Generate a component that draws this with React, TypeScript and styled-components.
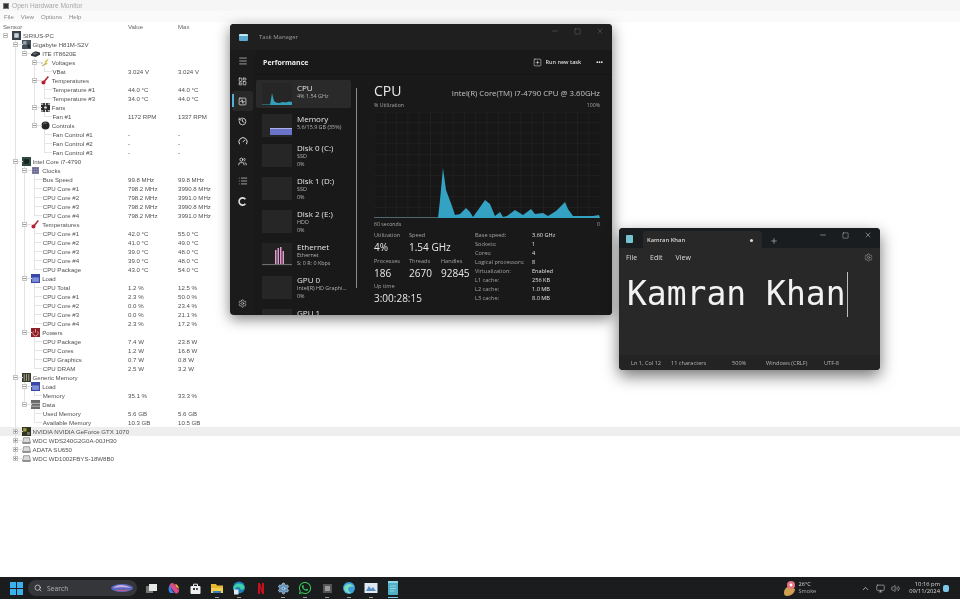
import React from 'react';
import styled, { createGlobalStyle } from 'styled-components';
import { Menu, SquareActivity, History, Gauge, Users, List, Settings, Search, Minus, Square, X, Plus, ChevronUp, Volume2, Monitor as MonitorIcon, LayoutDashboard, SquarePlus } from 'lucide-react';
import { FaWhatsapp } from 'react-icons/fa';

const Global = createGlobalStyle`
  html, body { margin: 0; padding: 0; background: #fff; }
  * { box-sizing: border-box; }
  #root { width: 960px; height: 600px; overflow: hidden; }
`;

const SANS = `"Open Sans", "Noto Sans", "Liberation Sans", sans-serif`;

const Desktop = styled.div`
  position: relative;
  width: 960px;
  height: 600px;
  display: flex;
  flex-direction: column;
  background: #fff;
  font-family: ${SANS};
  filter: blur(0.35px);
  overflow: hidden;
`;

/* ---------- Open Hardware Monitor ---------- */
const Monitor = styled.div`
  flex: 1;
  display: flex;
  flex-direction: column;
  color: #505050;
  font-family: "Liberation Sans", sans-serif;
  font-size: 6.1px;
`;
const MonTitle = styled.div`
  height: 11px;
  display: flex;
  align-items: center;
  gap: 3px;
  padding-left: 3px;
  background: #f6f6f6;
  color: #a8a8a8;
  font-size: 6.6px;
`;
const MonLogo = styled.span`
  width: 6px;
  height: 6px;
  background: #333;
  border: 1px solid #777;
`;
const MonMenu = styled.div`
  height: 11px;
  display: flex;
  align-items: center;
  gap: 7px;
  padding-left: 4px;
  background: #fafafa;
  color: #888;
  font-size: 6.1px;
`;
const ColumnHead = styled.div`
  height: 9px;
  display: grid;
  grid-template-columns: 125px 50px 1fr;
  align-items: center;
  padding-left: 3px;
  color: #666;
`;
const Tree = styled.div`
  display: flex;
  flex-direction: column;
`;
const TreeRow = styled.div<{ $hl?: boolean }>`
  position: relative;
  height: 9px;
  display: grid;
  grid-template-columns: 128px 50px 1fr;
  align-items: center;
  line-height: 9px;
  white-space: nowrap;
  background: ${p => (p.$hl ? '#eeeeee' : 'transparent')};
`;
const NameCell = styled.div<{ $x: number }>`
  padding-left: ${p => p.$x}px;
  display: flex;
  align-items: center;
  gap: 2px;
  position: relative;
  height: 9px;
`;
const VGuide = styled.span<{ $x: number; $stub?: boolean }>`
  position: absolute;
  left: ${p => p.$x}px;
  top: 0;
  height: ${p => (p.$stub ? '5px' : '9px')};
  width: 1px;
  background: #e4e4e4;
`;
const HGuide = styled.span<{ $x: number }>`
  position: absolute;
  left: ${p => p.$x}px;
  top: 4px;
  height: 1px;
  width: 8px;
  background: #e4e4e4;
`;
const Expander = styled.span<{ $x: number; $plus?: boolean }>`
  position: absolute;
  left: ${p => p.$x}px;
  top: 2px;
  width: 5px;
  height: 5px;
  border: 1px solid #c4c4c4;
  background: #fff;
  &::after {
    content: '';
    position: absolute;
    left: 0;
    right: 0;
    top: 1px;
    height: 1px;
    background: #999;
  }
  ${p => p.$plus && `
    &::before {
      content: '';
      position: absolute;
      left: 1px;
      top: 0;
      bottom: 0;
      width: 1px;
      background: #999;
    }
  `}
`;
const IconSvg = styled.svg`
  width: 9px;
  height: 9px;
  flex: 0 0 9px;
`;

type IconKind = 'pc' | 'board' | 'chip' | 'volt' | 'temp' | 'fan' | 'ctrl' | 'cpu' | 'clock' | 'load' | 'power' | 'ram' | 'data' | 'gpu' | 'disk';

const ICON_ART: Record<IconKind, React.ReactNode> = {
  pc: <><rect width="8" height="8" fill="#3a4048" /><rect x="2" y="2" width="4" height="4" fill="#c8d0d8" /></>,
  board: <><rect width="8" height="8" fill="#44505a" /><rect x="1" y="1" width="3" height="3" fill="#9aa5ae" /><rect x="5" y="4" width="2" height="3" fill="#22282e" /></>,
  chip: <><path d="M0 4l4-2 4 1v2L4 7 0 6z" fill="#303438" /><path d="M1 4l3-1 2 1-3 1z" fill="#6a7078" /></>,
  volt: <><path d="M7 0L3 3l1 1-4 4 6-3-1-1z" fill="#d8c850" /><path d="M0 5l2-1M1 7l3-2" stroke="#9a9a9a" strokeWidth=".6" /></>,
  temp: <><path d="M6.5 .5L2.8 5" stroke="#b03040" strokeWidth="1.4" /><circle cx="2.2" cy="5.8" r="1.8" fill="#b8202f" /></>,
  fan: <><rect width="8" height="8" fill="#2a2a2a" /><circle cx="4" cy="4" r="1.2" fill="#ddd" /><path d="M0 1h2M6 1h2M0 7h2M6 7h2M4 0v2M4 6v2" stroke="#ddd" strokeWidth="1" /></>,
  ctrl: <><circle cx="4" cy="4" r="3.6" fill="#262626" /><path d="M2 2.6a2.6 2.6 0 0 1 3-.6" stroke="#999" strokeWidth=".7" fill="none" /></>,
  cpu: <><rect width="8" height="8" fill="#2f4a40" /><rect x="2" y="2" width="4" height="4" fill="#15221d" /></>,
  clock: <><rect x="1" y="1" width="6" height="6" fill="#60608a" /><path d="M1 3h6M1 5h6M3 1v6M5 1v6" stroke="#9a9ab8" strokeWidth=".5" /></>,
  load: <><rect width="8" height="8" fill="#3848a8" /><rect x="1" y="3" width="6" height="4" fill="#8090d8" /></>,
  power: <><rect width="8" height="8" fill="#8a2028" /><path d="M4 1v3M2.2 3a2.4 2.4 0 1 0 3.6 0" stroke="#e8b0b0" strokeWidth=".7" fill="none" /></>,
  ram: <><rect width="8" height="8" fill="#3a3a30" /><path d="M2 1v6M4 1v6M6 1v6" stroke="#b8b8a0" strokeWidth=".7" /></>,
  data: <><rect width="8" height="8" fill="#6a6a6a" /><path d="M0 3h8M0 5.5h8" stroke="#c8c8c8" strokeWidth=".7" /></>,
  gpu: <><rect width="8" height="8" fill="#30331e" /><rect x="1" y="1" width="3" height="3" fill="#9ca040" /><rect x="4.5" y="4.5" width="2.5" height="2.5" fill="#777" /></>,
  disk: <><path d="M1.5 1.5h5l1 4.5H.5z" fill="#d8d8d8" stroke="#777" strokeWidth=".6" /><rect x=".5" y="5.5" width="7" height="1.5" fill="#888" /></>,
};
const TreeIcon = ({ kind }: { kind: IconKind }) => <IconSvg viewBox="0 0 8 8">{ICON_ART[kind]}</IconSvg>;

type Node = { n: string; v?: string; m?: string; i?: IconKind; hl?: boolean; closed?: boolean; c?: Node[] };
const leaf = (n: string, v: string, m: string): Node => ({ n, v, m });

const TREE: Node = {
  n: 'SIRIUS-PC', i: 'pc', c: [
    { n: 'Gigabyte H81M-S2V', i: 'board', c: [
      { n: 'ITE IT8620E', i: 'chip', c: [
        { n: 'Voltages', i: 'volt', c: [leaf('VBat', '3.024 V', '3.024 V')] },
        { n: 'Temperatures', i: 'temp', c: [leaf('Temperature #1', '44.0 °C', '44.0 °C'), leaf('Temperature #3', '34.0 °C', '44.0 °C')] },
        { n: 'Fans', i: 'fan', c: [leaf('Fan #1', '1172 RPM', '1337 RPM')] },
        { n: 'Controls', i: 'ctrl', c: [leaf('Fan Control #1', '-', '-'), leaf('Fan Control #2', '-', '-'), leaf('Fan Control #3', '-', '-')] },
      ] },
    ] },
    { n: 'Intel Core i7-4790', i: 'cpu', c: [
      { n: 'Clocks', i: 'clock', c: [
        leaf('Bus Speed', '99.8 MHz', '99.8 MHz'), leaf('CPU Core #1', '798.2 MHz', '3990.8 MHz'), leaf('CPU Core #2', '798.2 MHz', '3991.0 MHz'),
        leaf('CPU Core #3', '798.2 MHz', '3990.8 MHz'), leaf('CPU Core #4', '798.2 MHz', '3991.0 MHz'),
      ] },
      { n: 'Temperatures', i: 'temp', c: [
        leaf('CPU Core #1', '42.0 °C', '55.0 °C'), leaf('CPU Core #2', '41.0 °C', '49.0 °C'), leaf('CPU Core #3', '39.0 °C', '48.0 °C'),
        leaf('CPU Core #4', '39.0 °C', '48.0 °C'), leaf('CPU Package', '43.0 °C', '54.0 °C'),
      ] },
      { n: 'Load', i: 'load', c: [
        leaf('CPU Total', '1.2 %', '12.5 %'), leaf('CPU Core #1', '2.3 %', '50.0 %'), leaf('CPU Core #2', '0.0 %', '23.4 %'),
        leaf('CPU Core #3', '0.0 %', '21.1 %'), leaf('CPU Core #4', '2.3 %', '17.2 %'),
      ] },
      { n: 'Powers', i: 'power', c: [
        leaf('CPU Package', '7.4 W', '23.8 W'), leaf('CPU Cores', '1.2 W', '16.8 W'), leaf('CPU Graphics', '0.7 W', '0.8 W'), leaf('CPU DRAM', '2.5 W', '3.2 W'),
      ] },
    ] },
    { n: 'Generic Memory', i: 'ram', c: [
      { n: 'Load', i: 'load', c: [leaf('Memory', '35.1 %', '33.3 %')] },
      { n: 'Data', i: 'data', c: [leaf('Used Memory', '5.6 GB', '5.6 GB'), leaf('Available Memory', '10.3 GB', '10.5 GB')] },
    ] },
    { n: 'NVIDIA NVIDIA GeForce GTX 1070', i: 'gpu', hl: true, closed: true },
    { n: 'WDC WDS240G2G0A-00JH30', i: 'disk', closed: true },
    { n: 'ADATA SU650', i: 'disk', closed: true },
    { n: 'WDC WD1002FBYS-18W8B0', i: 'disk', closed: true },
  ],
};

type Flat = { node: Node; depth: number; guides: number[]; last: boolean };
const flatten = (node: Node, depth: number, guides: number[], last: boolean, out: Flat[]) => {
  out.push({ node, depth, guides, last });
  const kids = node.c || [];
  kids.forEach((k, i) => {
    const isLast = i === kids.length - 1;
    flatten(k, depth + 1, isLast ? guides : [...guides, depth + 1], isLast, out);
  });
  return out;
};
const ROWS = flatten(TREE, 0, [], false, []);
const guideX = (d: number) => Math.round(5 + d * 9.7);

const SensorTree = () => (
  <Tree>
    {ROWS.map(({ node, depth, guides, last }, i) => {
      const isLeaf = !node.i;
      const textX = isLeaf ? 14 + depth * 9.6 : 12 + depth * 9.6;
      return (
        <TreeRow key={i} $hl={node.hl}>
          <NameCell $x={textX}>
            {guides.map(g => <VGuide key={g} $x={guideX(g)} />)}
            {depth > 0 && last && <VGuide $x={guideX(depth)} $stub />}
            {depth > 0 && <HGuide $x={guideX(depth)} />}
            {!isLeaf && <Expander $x={guideX(depth) - 2} $plus={node.closed} />}
            {node.i && <TreeIcon kind={node.i} />}
            <span>{node.n}</span>
          </NameCell>
          <span>{node.v}</span>
          <span>{node.m}</span>
        </TreeRow>
      );
    })}
  </Tree>
);

/* ---------- Windows ---------- */
const TaskWin = styled.section`
  position: absolute;
  left: 230px;
  top: 24px;
  width: 382px;
  height: 291px;
  background: #1b1b1b;
  border-radius: 4px;
  box-shadow: 0 4px 14px rgba(0, 0, 0, .5);
  color: #e4e4e4;
  display: flex;
  flex-direction: column;
  overflow: hidden;
`;
const TmTitle = styled.header`
  height: 26px;
  display: flex;
  align-items: center;
  padding: 0 8px 0 9px;
  gap: 11px;
  background: #1f1f1f;
  font-size: 6px;
  color: #9a9a9a;
  flex: none;
`;
const TmLogo = styled.span`
  width: 9px;
  height: 7px;
  border-radius: 1px;
  background: linear-gradient(#bfe6f5 0 30%, #5aa9d0 30% 100%);
`;
const TmControls = styled.div`
  align-self: flex-start;
  margin: 3px 0 0 auto;
  display: flex;
`;
const WinControls = styled.div<{ $gap: number; $color: string }>`
  display: flex;
  align-items: center;
  gap: ${p => p.$gap}px;
  color: ${p => p.$color};
`;
const TmBody = styled.div`
  flex: 1;
  min-height: 0;
  display: flex;
`;
const Rail = styled.nav`
  width: 25px;
  flex: none;
  display: flex;
  flex-direction: column;
  align-items: center;
  gap: 10px;
  padding: 6px 0 7px;
  color: #dedede;
`;
const RailItem = styled.div<{ $on?: boolean }>`
  position: relative;
  width: 21px;
  height: 10px;
  display: flex;
  align-items: center;
  justify-content: center;
  ${p => p.$on && `
    &::before {
      content: '';
      position: absolute;
      left: 0;
      top: -2px;
      width: 1.5px;
      height: 13px;
      background: #4aa8d8;
    }
    &::after {
      content: '';
      position: absolute;
      inset: -5px 0;
      background: rgba(255,255,255,.06);
      border-radius: 3px;
    }
  `}
`;
const RailBottom = styled(RailItem)`
  margin-top: auto;
`;
const TmContent = styled.div`
  flex: 1;
  min-width: 0;
  display: flex;
  flex-direction: column;
  background: #191919;
`;
const TmHeader = styled.div`
  height: 25px;
  flex: none;
  display: flex;
  align-items: center;
  padding: 0 9px 0 8px;
  font-size: 7px;
  font-weight: 700;
  color: #eee;
  border-bottom: 1px solid #141414;
`;
const RunTask = styled.div`
  margin-left: auto;
  display: flex;
  align-items: center;
  gap: 3px;
  font-size: 5.5px;
  font-weight: 600;
  color: #ddd;
`;
const Dots = styled.span`
  margin-left: 15px;
  font-size: 5.5px;
  letter-spacing: .2px;
  line-height: 6px;
  color: #eee;
`;
const PerfArea = styled.div`
  flex: 1;
  min-height: 0;
  display: flex;
`;
const PerfList = styled.div`
  position: relative;
  width: 103px;
  flex: none;
  overflow: hidden;
`;
const ListStack = styled.div`
  margin-top: -2px;
`;
const ListBar = styled.span`
  position: absolute;
  right: 1px;
  top: 13px;
  width: 1px;
  height: 200px;
  background: #8a8a8a;
`;
const Card = styled.div<{ $on?: boolean; $lift?: number; $sink?: number }>`
  position: relative;
  height: 33px;
  display: flex;
  align-items: center;
  gap: 5px;
  padding-left: 7px;
  padding-top: ${p => p.$sink || 0}px;
  padding-bottom: ${p => p.$lift || 0}px;
  ${p => p.$on && `
    &::before {
      content: '';
      position: absolute;
      left: 1px;
      right: 7px;
      top: 7px;
      bottom: -2px;
      background: #2a2a2a;
      border-radius: 2px;
    }
  `}
  & > * { position: relative; }
`;
const Thumb = styled.div<{ $dark?: boolean; $dy?: number }>`
  width: 30px;
  height: 23px;
  flex: none;
  margin-top: ${p => p.$dy || 0}px;
  background: ${p => (p.$dark ? '#222' : '#262626')};
  svg { display: block; }
`;
const CardText = styled.div`
  display: flex;
  flex-direction: column;
  white-space: nowrap;
`;
const CardName = styled.span`
  font-size: 8px;
  line-height: 9px;
  color: #e6e6e6;
`;
const CardSub = styled.span`
  font-size: 5.4px;
  line-height: 8px;
  color: #b4b4b4;
`;
const PerfMain = styled.div`
  flex: 1;
  min-width: 0;
  padding: 7px 12px 0 16px;
  display: flex;
  flex-direction: column;
`;
const HeadRow = styled.div<{ $mt?: number }>`
  display: flex;
  justify-content: space-between;
  align-items: baseline;
  margin-top: ${p => p.$mt || 0}px;
`;
const CpuTitle = styled.span`
  font-size: 14px;
  line-height: 18px;
  color: #eaeaea;
`;
const CpuModel = styled.span`
  font-size: 7.8px;
  color: #c4c4c4;
`;
const Tiny = styled.span`
  font-size: 5.2px;
  line-height: 8px;
  color: #a8a8a8;
`;
const Graph = styled.div`
  height: 106px;
  margin-top: 3px;
  background: #171717;
  svg { display: block; }
`;
const StatsRow = styled.div`
  display: flex;
  margin-top: 4px;
`;
const StatsLeft = styled.div`
  width: 101px;
  flex: none;
  display: grid;
  grid-template-columns: 35px 32px 34px;
  grid-auto-rows: 25.5px;
`;
const Stat = styled.div<{ $span?: number }>`
  display: flex;
  flex-direction: column;
  white-space: nowrap;
  grid-column: span ${p => p.$span || 1};
`;
const StatLabel = styled.span`
  font-size: 5.6px;
  line-height: 7px;
  color: #a2a2a2;
`;
const StatValue = styled.span`
  font-size: 10px;
  line-height: 16px;
  color: #e8e8e8;
`;
const Specs = styled.div`
  display: grid;
  grid-template-columns: 57px auto;
  grid-auto-rows: 9px;
  align-items: center;
  font-size: 5.6px;
  color: #a4a4a4;
  margin-top: -2px;
  height: 72px;
  & > b { font-weight: 400; color: #e0e0e0; }
`;

const NoteWin = styled.section`
  position: absolute;
  left: 619px;
  top: 228px;
  width: 261px;
  height: 142px;
  background: #282828;
  border-radius: 4px;
  box-shadow: 0 6px 16px rgba(0, 0, 0, .55);
  display: flex;
  flex-direction: column;
  overflow: hidden;
  color: #e4e4e4;
`;
const NoteTop = styled.header`
  height: 20px;
  flex: none;
  display: flex;
  align-items: flex-end;
  padding: 0 7px;
  background: #191d20;
`;
const NoteLogo = styled.span`
  width: 7px;
  height: 8px;
  margin: 0 10px 5px 0;
  background: #74c4cf;
  border-radius: 1px;
`;
const NoteTab = styled.div`
  width: 119px;
  height: 17px;
  display: flex;
  align-items: center;
  justify-content: space-between;
  padding: 1px 9px 0 4px;
  background: #282828;
  border-radius: 3px 3px 0 0;
  font-size: 5.8px;
  font-weight: 600;
  color: #d8d8d8;
`;
const TabDot = styled.span`
  width: 3px;
  height: 3px;
  border-radius: 50%;
  background: #ddd;
`;
const NewTab = styled.span`
  margin: 0 0 3px 8px;
  display: flex;
  color: #b8b8b8;
`;
const NoteControls = styled.div`
  margin: 0 1px 9px auto;
  display: flex;
`;
const NoteMenu = styled.div`
  height: 18px;
  flex: none;
  display: flex;
  align-items: center;
  gap: 13px;
  padding: 0 7px;
  font-size: 7px;
  color: #dcdcdc;
`;
const MenuGear = styled.span`
  margin-left: auto;
  display: flex;
  color: #aaa;
`;
const NoteEditor = styled.div`
  flex: 1;
  min-height: 0;
  padding: 6px 0 0 8px;
  display: flex;
  align-items: flex-start;
  font-family: "DejaVu Sans Mono", "Liberation Mono", monospace;
  font-size: 33px;
  line-height: 44px;
  color: #f2f2f2;
  white-space: pre;
`;
const Caret = styled.span`
  width: 1px;
  height: 45px;
  margin-left: 1px;
  background: #bdbdbd;
`;
const NoteStatus = styled.footer`
  height: 15px;
  flex: none;
  display: grid;
  grid-template-columns: 40px 61px 34px 58px 1fr;
  align-items: center;
  padding-left: 12px;
  background: #232323;
  font-size: 5.6px;
  color: #b4b4b4;
  white-space: nowrap;
`;

/* ---------- Taskbar ---------- */
const Taskbar = styled.footer`
  height: 22px;
  margin-bottom: 1px;
  flex: none;
  display: flex;
  align-items: center;
  padding: 0 11px 0 10px;
  background: #1a1c1e;
  color: #ddd;
`;
const StartGrid = styled.span`
  width: 13px;
  height: 13px;
  display: grid;
  grid-template-columns: 1fr 1fr;
  gap: 1px;
  & > i { background: #3bb0ee; display: block; }
`;
const SearchPill = styled.div`
  margin-left: 5px;
  width: 109px;
  height: 16px;
  border-radius: 8px;
  background: #34363a;
  display: flex;
  align-items: center;
  gap: 5px;
  padding: 0 3px 0 6px;
  font-size: 6.8px;
  color: #b4b4b4;
`;
const SearchArt = styled.span`
  margin-left: auto;
  display: flex;
`;
const TaskIcons = styled.div`
  margin-left: 7px;
  display: flex;
  align-items: center;
  gap: 8px;
`;
const TaskIcon = styled.span<{ $active?: boolean; $open?: boolean }>`
  position: relative;
  width: 14px;
  height: 14px;
  display: flex;
  align-items: center;
  justify-content: center;
  ${p => (p.$open || p.$active) && `
    &::after {
      content: '';
      position: absolute;
      left: ${p.$active ? 2 : 5}px;
      right: ${p.$active ? 2 : 5}px;
      bottom: -3px;
      height: 1px;
      background: ${p.$active ? '#7ccbe8' : '#999'};
    }
  `}
`;
const Weather = styled.div`
  margin-left: auto;
  display: flex;
  align-items: center;
  gap: 2px;
`;
const WeatherText = styled.div`
  display: flex;
  flex-direction: column;
  font-size: 5.6px;
  line-height: 7px;
  color: #d8d8d8;
  & > span:last-child { color: #aaa; }
`;
const Tray = styled.div`
  margin-left: 45px;
  display: flex;
  align-items: center;
  gap: 6px;
  color: #cfcfcf;
`;
const Clock = styled.div`
  margin-left: 9px;
  display: flex;
  flex-direction: column;
  align-items: flex-end;
  font-size: 5.8px;
  line-height: 7.5px;
  color: #d8d8d8;
`;
const Notify = styled.span`
  margin-left: 3px;
  width: 6px;
  height: 7px;
  border-radius: 2px;
  background: #7cc8e8;
`;

/* ---------- Drawings ---------- */
const Spark = ({ kind }: { kind: string }) => {
  if (kind === 'cpu') {
    return (
      <svg width="30" height="23" viewBox="0 0 30 23">
        <path d="M0 21.5H8M27 21.5H30" stroke="#3aa" strokeWidth=".5" />
        <path d="M8 22L10 10l2 8 2 1.5 3 .5 4-1 3 .5 3-1 3 .5V22z" fill="#32a0b8" />
      </svg>
    );
  }
  if (kind === 'mem') {
    return (
      <svg width="30" height="23" viewBox="0 0 30 23">
        <rect x="8" y="14" width="22" height="7" fill="#6a74c8" />
        <rect x="8" y="14" width="22" height="1" fill="#aab0ea" />
      </svg>
    );
  }
  if (kind === 'eth') {
    return (
      <svg width="30" height="23" viewBox="0 0 30 23">
        <path d="M0 21.5H30" stroke="#bbb" strokeWidth=".5" />
        <path d="M13 21V7h1.5v14zM15.5 21V5H17v16zM18 21V4h1.5v17zM20.5 21V8H22v13z" fill="#e29ad0" />
      </svg>
    );
  }
  return null;
};

const CPU_PATH = 'M64 106L66 88L69 56L72 78L75 86L78 94L81 103L86 102L92 96L96 100L99 105L104 98L111 88L116 92L121 104L126 100L129 105L133 104L141 98L149 103L157 97L161 102L169 101L174 104L182 99L191 90L194 97L199 104L219 104L225 103L226 106Z';
const CpuGraph = () => {
  const v = Array.from({ length: 20 }, (_, i) => i * (226 / 20));
  const h = Array.from({ length: 10 }, (_, i) => i * 10.6);
  return (
    <svg width="226" height="106" viewBox="0 0 226 106">
      {v.map(x => <path key={x} d={`M${x} 0V106`} stroke="#262626" strokeWidth=".6" />)}
      {h.map(y => <path key={y} d={`M0 ${y}H226`} stroke="#262626" strokeWidth=".6" />)}
      <path d="M0 105.5H64" stroke="#5a7e88" strokeWidth=".8" />
      <path d={CPU_PATH} fill="#34a2c2" />
    </svg>
  );
};

const Winbar = ({ gap, color, s }: { gap: number; color: string; s: number }) => (
  <WinControls $gap={gap} $color={color}>
    <Minus size={s} strokeWidth={1.4} />
    <Square size={s - 1} strokeWidth={1.4} />
    <X size={s} strokeWidth={1.4} />
  </WinControls>
);

const ServicesIcon = () => (
  <svg width="9" height="9" viewBox="0 0 9 9"><path d="M7.4 2.2A3.6 3.6 0 1 0 7.4 6.8" fill="none" stroke="currentColor" strokeWidth="1.6" /></svg>
);

const TaskApps = () => (
  <TaskIcons>
    <TaskIcon>
      <svg width="13" height="13" viewBox="0 0 13 13"><rect x="1" y="4" width="7" height="7" fill="#777" /><rect x="4" y="2" width="8" height="7" fill="#e8e8e8" /></svg>
    </TaskIcon>
    <TaskIcon>
      <svg width="13" height="13" viewBox="0 0 13 13"><path d="M3 2c2-2 4-1 5 1l2 3c1 2 3 1 2 3-1 3-3 3-4 2L5 7C4 5 2 8 2 6z" fill="#d8488a" /><path d="M3 11C1 9 1 5 3 3l2 5c1 2 2 3 3 3z" fill="#3f7fe0" /><path d="M8 2c2 0 4 2 4 5L9 5z" fill="#e8a030" /></svg>
    </TaskIcon>
    <TaskIcon>
      <svg width="13" height="13" viewBox="0 0 13 13"><rect x="1.5" y="4" width="10" height="8" rx="1" fill="#eee" /><path d="M4.5 4V2.2h4V4" stroke="#eee" fill="none" /><rect x="4" y="6" width="2" height="2" fill="#333" /><rect x="7" y="6" width="2" height="2" fill="#555" /></svg>
    </TaskIcon>
    <TaskIcon $open>
      <svg width="14" height="13" viewBox="0 0 14 13"><path d="M1 2h5l1 1.5h6V11H1z" fill="#e8b830" /><rect x="1" y="6" width="12" height="5" fill="#f4d050" /><rect x="3" y="9" width="8" height="2" fill="#3a80c0" /></svg>
    </TaskIcon>
    <TaskIcon $open>
      <svg width="14" height="14" viewBox="0 0 14 14"><circle cx="7" cy="6.5" r="6" fill="#1b7fb8" /><path d="M1.5 6C3 2 10 1 12.5 6c.5 2-2 3-4 2.5C9 6 5 5 3.5 7c-1 1.5 0 4 2.5 5C3 12 1 9 1.5 6z" fill="#3fd0a8" /><rect x="2" y="8.5" width="4.5" height="5" rx=".5" fill="#dfe8f0" /></svg>
    </TaskIcon>
    <TaskIcon>
      <svg width="6" height="11" viewBox="0 0 6 11"><path d="M0 0h2l2 6V0h2v11H4L2 5v6H0z" fill="#c8101c" /></svg>
    </TaskIcon>
    <TaskIcon $open>
      <Settings size={13} color="#c8d8e8" fill="#5b8db8" strokeWidth={1.4} />
    </TaskIcon>
    <TaskIcon $open>
      <FaWhatsapp size={14} color="#33c85a" />
    </TaskIcon>
    <TaskIcon $open>
      <svg width="11" height="11" viewBox="0 0 11 11"><rect x="1" y="1" width="9" height="9" fill="#555" /><rect x="3" y="3" width="5" height="5" fill="#999" /></svg>
    </TaskIcon>
    <TaskIcon $open>
      <svg width="14" height="14" viewBox="0 0 14 14"><circle cx="7" cy="7" r="6" fill="#3aa0d8" /><path d="M2 7c1-4 7-6 10-1-3-1-6 0-6 2s2 3 3 4C5 13 2 10 2 7z" fill="#7adcc0" /></svg>
    </TaskIcon>
    <TaskIcon $open>
      <svg width="14" height="12" viewBox="0 0 14 12"><rect x=".5" y="1" width="13" height="10" fill="#dce8f4" /><path d="M2 9l3-5 2 3 2-2 3 4z" fill="#5a8cc0" /></svg>
    </TaskIcon>
    <TaskIcon $active>
      <svg width="10" height="14" viewBox="0 0 10 14"><rect width="10" height="14" rx="1" fill="#4fb0c8" /><rect width="10" height="2" fill="#8cd8e4" /><path d="M2 5h6M2 7.5h6M2 10h4" stroke="#c8eef4" strokeWidth=".6" /></svg>
    </TaskIcon>
  </TaskIcons>
);

const CARDS: { name: string; sub: string[]; spark?: string; on?: boolean; sink?: number; lift?: number; dy?: number }[] = [
  { name: 'CPU', sub: ['4% 1.54 GHz'], spark: 'cpu', on: true, sink: 3, dy: 6 },
  { name: 'Memory', sub: ['5.6/15.9 GB (35%)'], spark: 'mem', dy: 5 },
  { name: 'Disk 0 (C:)', sub: ['SSD', '0%'] },
  { name: 'Disk 1 (D:)', sub: ['SSD', '0%'] },
  { name: 'Disk 2 (E:)', sub: ['HDD', '0%'] },
  { name: 'Ethernet', sub: ['Ethernet', 'S: 0 R: 0 Kbps'], spark: 'eth' },
  { name: 'GPU 0', sub: ['Intel(R) HD Graphi...', '0%'] },
  { name: 'GPU 1', sub: [], lift: 16, dy: 16 },
];
const SPECS: [string, string][] = [
  ['Base speed:', '3.60 GHz'], ['Sockets:', '1'], ['Cores:', '4'], ['Logical processors:', '8'],
  ['Virtualization:', 'Enabled'], ['L1 cache:', '256 KB'], ['L2 cache:', '1.0 MB'], ['L3 cache:', '8.0 MB'],
];
const STATS: { l: string; v: string; span?: number }[] = [
  { l: 'Utilization', v: '4%' }, { l: 'Speed', v: '1.54 GHz', span: 2 },
  { l: 'Processes', v: '186' }, { l: 'Threads', v: '2670' }, { l: 'Handles', v: '92845' },
  { l: 'Up time', v: '3:00:28:15', span: 3 },
];

export default function App() {
  return (
    <Desktop>
      <Global />
      <Monitor>
        <MonTitle><MonLogo /><span>Open Hardware Monitor</span></MonTitle>
        <MonMenu><span>File</span><span>View</span><span>Options</span><span>Help</span></MonMenu>
        <ColumnHead><span>Sensor</span><span>Value</span><span>Max</span></ColumnHead>
        <SensorTree />
      </Monitor>

      <TaskWin>
        <TmTitle>
          <TmLogo />
          <span>Task Manager</span>
          <TmControls><Winbar gap={15} color="#777" s={8} /></TmControls>
        </TmTitle>
        <TmBody>
          <Rail>
            <RailItem><Menu size={10} strokeWidth={1.6} /></RailItem>
            <RailItem><LayoutDashboard size={9} strokeWidth={2} /></RailItem>
            <RailItem $on><SquareActivity size={9} strokeWidth={2} /></RailItem>
            <RailItem><History size={9} strokeWidth={2.2} /></RailItem>
            <RailItem><Gauge size={10} strokeWidth={2.4} /></RailItem>
            <RailItem><Users size={9} strokeWidth={2.2} /></RailItem>
            <RailItem><List size={10} strokeWidth={1.6} /></RailItem>
            <RailItem><ServicesIcon /></RailItem>
            <RailBottom><Settings size={9} strokeWidth={1.6} /></RailBottom>
          </Rail>
          <TmContent>
            <TmHeader>
              <span>Performance</span>
              <RunTask><SquarePlus size={9} strokeWidth={1.5} /><span>Run new task</span></RunTask>
              <Dots>•••</Dots>
            </TmHeader>
            <PerfArea>
              <PerfList>
                <ListBar />
                <ListStack>
                  {CARDS.map(c => (
                    <Card key={c.name} $on={c.on} $sink={c.sink} $lift={c.lift}>
                      <Thumb $dark={c.spark === 'eth'} $dy={c.dy}>{c.spark && <Spark kind={c.spark} />}</Thumb>
                      <CardText>
                        <CardName>{c.name}</CardName>
                        {c.sub.map(s => <CardSub key={s}>{s}</CardSub>)}
                      </CardText>
                    </Card>
                  ))}
                </ListStack>
              </PerfList>
              <PerfMain>
                <HeadRow><CpuTitle>CPU</CpuTitle><CpuModel>Intel(R) Core(TM) i7-4790 CPU @ 3.60GHz</CpuModel></HeadRow>
                <HeadRow $mt={1}><Tiny>% Utilization</Tiny><Tiny>100%</Tiny></HeadRow>
                <Graph><CpuGraph /></Graph>
                <HeadRow $mt={2}><Tiny>60 seconds</Tiny><Tiny>0</Tiny></HeadRow>
                <StatsRow>
                  <StatsLeft>
                    {STATS.map(s => (
                      <Stat key={s.l} $span={s.span}>
                        <StatLabel>{s.l}</StatLabel>
                        <StatValue>{s.v}</StatValue>
                      </Stat>
                    ))}
                  </StatsLeft>
                  <Specs>
                    {SPECS.map(([k, v]) => (
                      <React.Fragment key={k}><span>{k}</span><b>{v}</b></React.Fragment>
                    ))}
                  </Specs>
                </StatsRow>
              </PerfMain>
            </PerfArea>
          </TmContent>
        </TmBody>
      </TaskWin>

      <NoteWin>
        <NoteTop>
          <NoteLogo />
          <NoteTab><span>Kamran Khan</span><TabDot /></NoteTab>
          <NewTab><Plus size={8} /></NewTab>
          <NoteControls><Winbar gap={15} color="#e4e4e4" s={8} /></NoteControls>
        </NoteTop>
        <NoteMenu>
          <span>File</span><span>Edit</span><span>View</span>
          <MenuGear><Settings size={9} strokeWidth={1.4} /></MenuGear>
        </NoteMenu>
        <NoteEditor><span>Kamran Khan</span><Caret /></NoteEditor>
        <NoteStatus>
          <span>Ln 1, Col 12</span><span>11 characters</span><span>500%</span><span>Windows (CRLF)</span><span>UTF-8</span>
        </NoteStatus>
      </NoteWin>

      <Taskbar>
        <StartGrid><i /><i /><i /><i /></StartGrid>
        <SearchPill>
          <Search size={8} strokeWidth={2} color="#e8e8e8" />
          <span>Search</span>
          <SearchArt>
            <svg width="24" height="10" viewBox="0 0 24 10">
              <ellipse cx="12" cy="5" rx="11" ry="4" fill="#5a68c0" />
              <path d="M3 5c4-4 12-4 18 0-6-1-12-1-18 0z" fill="#c8b0e0" />
              <path d="M6 7c4 1 8 1 12 0" stroke="#d05878" strokeWidth="1" fill="none" />
            </svg>
          </SearchArt>
        </SearchPill>
        <TaskApps />
        <Weather>
          <svg width="14" height="16" viewBox="0 0 14 16">
            <path d="M1 13c0-4 3-7 7-6l4 2c0 4-4 7-8 7-2 0-3-1-3-3z" fill="#d0a050" />
            <circle cx="8" cy="5" r="4" fill="#e87080" />
            <circle cx="8" cy="5" r="1.4" fill="#fff" />
          </svg>
          <WeatherText><span>26°C</span><span>Smoke</span></WeatherText>
        </Weather>
        <Tray>
          <ChevronUp size={9} strokeWidth={2} />
          <MonitorIcon size={9} strokeWidth={1.5} />
          <Volume2 size={9} strokeWidth={1.5} />
        </Tray>
        <Clock><span>10:16 pm</span><span>09/11/2024</span></Clock>
        <Notify />
      </Taskbar>
    </Desktop>
  );
}
